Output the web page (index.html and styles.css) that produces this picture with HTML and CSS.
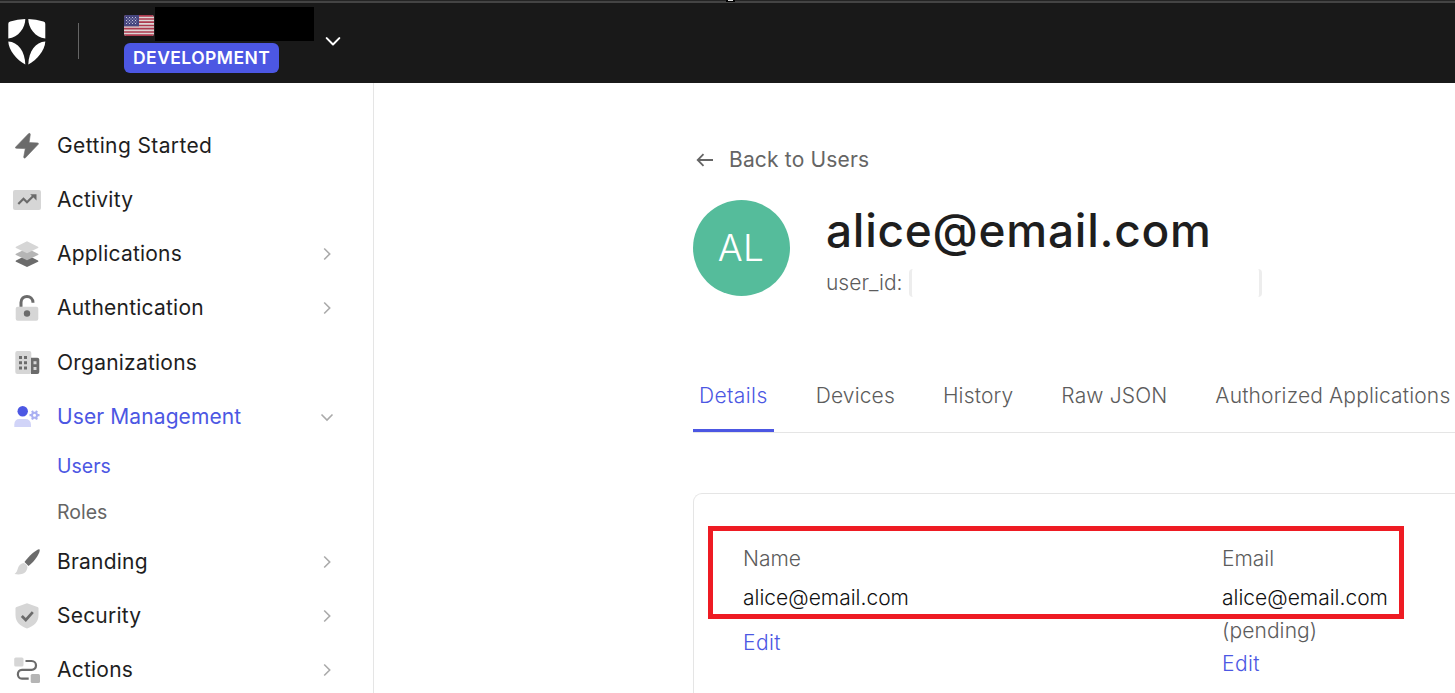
FILE: index.html
```html
<!DOCTYPE html>
<html lang="en">
<head>
<meta charset="utf-8">
<title>User Details</title>
<link rel="stylesheet" href="styles.css">
</head>
<body>
<header class="topbar">
  <span class="topbar-handle"></span>
  <svg class="logo" width="38" height="46" viewBox="0 0 38 46" fill="#fff">
    <path d="M17.3 0C17.4 8.5 10.500 18.600 0.300 19.500V4.700Q0.300 2.900 2.200 2.500Q9.500 0 17.300 0Z"/>
    <path d="M20.300 0C20.200 8.500 27.100 18.600 37.300 19.500V4.700Q37.300 2.900 35.400 2.500Q28.100 0 20.300 0Z"/>
    <path d="M0.300 22.400C10 23 17 32 17.300 45.600C8.500 40.500 0.800 31.500 0.300 22.400Z"/>
    <path d="M37.300 22.400C27.600 23 20.600 32 20.300 45.600C29.100 40.500 36.800 31.500 37.300 22.400Z"/>
  </svg>
  <span class="topbar-divider"></span>
  <div class="tenant">
    <div class="tenant-row">
      <svg class="flag" width="30" height="21" viewBox="0 0 30 21">
        <defs><clipPath id="flagClip"><rect width="30" height="21" rx="2.500"/></clipPath></defs>
        <g clip-path="url(#flagClip)">
          <rect width="30" height="21" fill="#dcd6d6"/>
          <path d="M0 .8H30M0 4H30M0 7.200H30M0 10.500H30M0 13.700H30M0 17H30M0 20.200H30" stroke="#ac3a4e" stroke-width="1.700"/>
          <rect width="15" height="11.300" fill="#46467f"/>
          <path d="M2 2.500H14M2 5.500H14M2 8.500H14" stroke="#c3c3da" stroke-width="1" stroke-dasharray="1 2"/>
          <path d="M3.500 4H13M3.500 7H13" stroke="#c3c3da" stroke-width="1" stroke-dasharray="1 2"/>
        </g>
      </svg>
      <span class="tenant-name"></span>
    </div>
    <span class="env-badge">DEVELOPMENT</span>
  </div>
  <svg class="tenant-caret" width="16" height="10" viewBox="0 0 16 10" fill="none" stroke="#fff" stroke-width="2" stroke-linecap="round" stroke-linejoin="round"><path d="M1.700 1.100L8 7.500L14.300 1.100"/></svg>
</header>

<div class="page">
  <nav class="sidebar">
    <a class="nav-item"><svg class="nav-icon" viewBox="0 0 28 28"><path d="M15.500 1.700L2.700 15Q1.800 16.200 3.300 16.300L12.300 16.600L10.700 25Q10.800 26.800 12.400 25.800L25.200 12.300Q26 11 24.500 10.900L16.100 10.600L17.300 2.500Q17.100 .6 15.500 1.700Z" fill="#6b6b6b" stroke="#6b6b6b" stroke-width=".6"/></svg><span class="nav-label wide">Getting Started</span></a>
    <a class="nav-item"><svg class="nav-icon" viewBox="0 0 28 28"><rect y="4" width="28" height="20" rx="2" fill="#d6d6d6"/><path d="M5.300 18L10.500 12.800L14 16.300L20.500 9.800" fill="none" stroke="#6b6b6b" stroke-width="2.200"/><path d="M17.200 8.300H23.500V14.600Z" fill="#6b6b6b"/></svg><span class="nav-label">Activity</span></a>
    <a class="nav-item"><svg class="nav-icon" viewBox="0 0 28 28"><path d="M3 20.500L14 15L25 20.500Q26 21.200 25 21.800L14 27L3 21.800Q2 21.200 3 20.500Z" fill="#6b6b6b"/><path d="M3 13.800L14 8.300L25 13.800Q26 14.500 25 15.100L14 20.300L3 15.100Q2 14.500 3 13.800Z" fill="#b5b5b5"/><path d="M3 6.800L14 1.300L25 6.800Q26 7.500 25 8.100L14 13.300L3 8.100Q2 7.500 3 6.800Z" fill="#d6d6d6"/></svg><span class="nav-label">Applications</span><svg class="chevron" viewBox="0 0 14 14"><path d="M4.200 1.500L9.700 7L4.200 12.500"/></svg></a>
    <a class="nav-item"><svg class="nav-icon" viewBox="0 0 28 28"><rect x="2.700" y="12.700" width="22.600" height="14" rx="2" fill="#d6d6d6"/><path d="M8 12.800V8.500C8 .3 20 .3 20 8.800" fill="none" stroke="#6b6b6b" stroke-width="3"/><circle cx="14" cy="19.500" r="3.200" fill="#6b6b6b"/></svg><span class="nav-label">Authentication</span><svg class="chevron" viewBox="0 0 14 14"><path d="M4.200 1.500L9.700 7L4.200 12.500"/></svg></a>
    <a class="nav-item"><svg class="nav-icon" viewBox="0 0 28 28"><rect x="2.300" y="2" width="16" height="23" rx="2" fill="#d6d6d6"/><path d="M18 8.700H24.300Q26.300 8.700 26.300 10.700V23Q26.300 25 24.300 25H18Z" fill="#6b6b6b"/><path d="M6 7h3v3h-3zM11 7h3v3h-3zM6 12.300h3v3h-3zM11 12.300h3v3h-3zM6 17.600h3v3h-3zM11 17.600h3v3h-3z" fill="#6b6b6b"/><path d="M20.500 12.300h3v3h-3zM20.500 18h3v3h-3z" fill="#d6d6d6"/></svg><span class="nav-label">Organizations</span></a>
    <a class="nav-item active"><svg class="nav-icon" viewBox="0 0 28 28"><circle cx="9.700" cy="8.300" r="5.200" fill="#4c57e3"/><path d="M1.300 24V21.500Q1.500 16 6.500 16H12.500Q17.500 16 18 21.500V24Z" fill="#d1d4f8"/><g fill="none" stroke="#aab0f2"><circle cx="21.500" cy="12.200" r="2.500" stroke-width="2"/><path stroke-width="2.200" d="M24 12.200H26.500M19 12.200H16.500M22.750 14.400L24 16.500M20.250 10L19 7.900M20.250 14.400L19 16.500M22.750 10L24 7.900"/></g></svg><span class="nav-label tight">User Management</span><svg class="chevron" viewBox="0 0 14 14"><path d="M1.500 4.500L7 10L12.500 4.500"/></svg></a>
    <div class="subnav">
      <a class="sub-item active">Users</a>
      <a class="sub-item">Roles</a>
    </div>
    <a class="nav-item"><svg class="nav-icon" viewBox="0 0 28 28"><path d="M26.500 1.300C28 3.500 22 13.500 15.500 18L11.500 14C16 7.500 24.500 .5 26.500 1.300Z" fill="#6b6b6b"/><path d="M10.300 15C12.500 15.500 14 17 14.500 19C14 25.500 8 27.500 1.500 26C3.700 24.500 4.200 22.500 5 20C5.800 17.500 7.700 15.500 10.300 15Z" fill="#d6d6d6"/></svg><span class="nav-label">Branding</span><svg class="chevron" viewBox="0 0 14 14"><path d="M4.200 1.500L9.700 7L4.200 12.500"/></svg></a>
    <a class="nav-item"><svg class="nav-icon" viewBox="0 0 28 28"><path d="M14 1.200L24.500 5Q25.500 5.400 25.500 6.500V13C25.500 20 21 24 14 26.500C7 24 2.500 20 2.500 13V6.500Q2.500 5.400 3.500 5Z" fill="#d6d6d6"/><path d="M8.800 14L12.800 18L19.800 10.200" fill="none" stroke="#6b6b6b" stroke-width="2.700"/></svg><span class="nav-label">Security</span><svg class="chevron" viewBox="0 0 14 14"><path d="M4.200 1.500L9.700 7L4.200 12.500"/></svg></a>
    <a class="nav-item"><svg class="nav-icon" viewBox="0 0 28 28"><rect x="1.200" y="1.500" width="9.300" height="9" rx="1.500" fill="#d6d6d6"/><rect x="17.700" y="18" width="9.300" height="9" rx="1.500" fill="#b5b5b5"/><path d="M12.500 5H18.500C24.500 5 24.500 13.800 18.500 13.800H9C3.500 13.800 3.500 22.700 9 22.700H15.700" fill="none" stroke="#6b6b6b" stroke-width="2.200"/></svg><span class="nav-label">Actions</span><svg class="chevron" viewBox="0 0 14 14"><path d="M4.200 1.500L9.700 7L4.200 12.500"/></svg></a>
  </nav>

  <main class="content">
    <a class="back"><svg width="18" height="14" viewBox="0 0 18 14" fill="none" stroke="#656565" stroke-width="1.800"><path d="M17 7H2M7.500 1.200L1.700 7L7.500 12.800"/></svg><span>Back to Users</span></a>
    <section class="profile">
      <div class="avatar">AL</div>
      <div class="identity">
        <h1 class="title">alice@email.com</h1>
        <div class="user-id"><span>user_id:</span><span class="id-value"></span></div>
      </div>
    </section>
    <div class="tabs">
      <a class="tab active">Details</a>
      <a class="tab">Devices</a>
      <a class="tab">History</a>
      <a class="tab">Raw JSON</a>
      <a class="tab">Authorized Applications</a>
    </div>
    <section class="card">
      <div class="highlight"></div>
      <div class="field">
        <div class="field-label">Name</div>
        <div class="field-value">alice@email.com</div>
        <a class="edit edit-name">Edit</a>
      </div>
      <div class="field">
        <div class="field-label">Email</div>
        <div class="field-value">alice@email.com</div>
        <div class="pending">(pending)</div>
        <a class="edit">Edit</a>
      </div>
    </section>
  </main>
</div>
</body>
</html>
```
FILE: styles.css
```css
* { box-sizing: border-box; }
body {
  margin: 0;
  width: 1455px;
  height: 693px;
  overflow: hidden;
  background: #fff;
  color: #1e1e1e;
  font-family: Inter, "Liberation Sans", sans-serif;
  font-size: 21px;
}
.topbar {
  position: relative;
  display: flex;
  align-items: flex-start;
  height: 83px;
  padding-left: 8px;
  background: linear-gradient(#242424 0 1px, #444 1px 3px, #191919 3px);
}
.topbar-handle {
  position: absolute;
  left: 726px;
  top: 0;
  width: 9px;
  height: 2px;
  background: #ddd;
  border: solid #000;
  border-width: 0 2px 1px;
}
.logo { margin-top: 19px; }
.topbar-divider { width: 1px; height: 36px; margin: 23px 0 0 32px; background: #656565; }
.tenant { width: 190px; margin: 7px 0 0 45px; }
.tenant-row { display: flex; gap: 1px; height: 34px; }
.flag { margin-top: 8px; }
.tenant-name { width: 159px; height: 34px; background: #000; }
.env-badge {
  display: block;
  width: 155px;
  height: 30px;
  margin-top: 2px;
  padding-left: 9px;
  border-radius: 6px;
  background: #4c57e3;
  color: #fff;
  font-size: 17.500px;
  font-weight: 600;
  line-height: 30px;
  letter-spacing: .45px;
  white-space: nowrap;
}
.tenant-caret { margin: 37px 0 0 11px; }
.page { display: flex; height: 610px; }
.sidebar {
  width: 374px;
  flex: none;
  padding: 36px 0 0 13px;
  border-right: 1px solid #e5e5e5;
}
.nav-item { display: flex; align-items: center; height: 54.150px; }
.nav-icon { width: 28px; height: 28px; flex: none; }
.nav-label {
  flex: 1;
  margin-left: 16px;
  padding-bottom: 1px;
  letter-spacing: .22px;
  white-space: nowrap;
}
.nav-label.wide { letter-spacing: .38px; }
.nav-label.tight { letter-spacing: .1px; }
.chevron {
  width: 14px;
  height: 14px;
  margin-right: 39px;
  fill: none;
  stroke: #aaa;
  stroke-width: 1.600;
}
.nav-item.active, .sub-item.active { color: #4c57e3; }
.subnav { height: 91px; padding-left: 44px; font-size: 19.500px; color: #656565; }
.sub-item { display: block; height: 46px; line-height: 44px; }
.content { flex: 1; min-width: 0; padding: 61px 0 0 319px; }
.back {
  display: flex;
  align-items: center;
  gap: 15px;
  height: 32px;
  padding-left: 3px;
  color: #656565;
  letter-spacing: .17px;
}
.back span { padding-bottom: 1px; }
.profile { display: flex; gap: 36px; height: 120px; padding-top: 24px; }
.avatar {
  width: 97px;
  height: 96px;
  padding-right: 1px;
  border-radius: 50%;
  background: #55bc9b;
  color: #fff;
  font-size: 37px;
  font-weight: 350;
  line-height: 95px;
  letter-spacing: .3px;
  text-align: center;
}
.title {
  margin: 0;
  font-size: 46px;
  font-weight: 500;
  line-height: 60px;
  letter-spacing: .75px;
  white-space: nowrap;
}
.user-id {
  display: flex;
  gap: 6px;
  height: 28px;
  margin-top: 9px;
  line-height: 28px;
  color: #5c5c5c;
  font-weight: 350;
}
.id-value { width: 353px; border: solid #ededed; border-width: 0 3px; border-radius: 4px; }
.tabs {
  display: flex;
  gap: 36px;
  height: 74px;
  margin-top: 63px;
  border-bottom: 1px solid #e5e5e5;
  color: #5c5c5c;
  line-height: 74px;
  font-weight: 350;
  letter-spacing: .15px;
}
.tab { height: 73px; padding: 0 6px; white-space: nowrap; }
.tab.active {
  width: 81px;
  letter-spacing: .4px;
  color: #4c57e3;
  border-bottom: 3px solid #4c57e3;
}
.card {
  position: relative;
  display: grid;
  grid-template-columns: 479px 1fr;
  height: 220px;
  margin-top: 60px;
  padding: 48px 0 0 49px;
  border: 1px solid #e5e5e5;
  border-right: 0;
  border-radius: 9px 0 0 9px;
  line-height: 33px;
  font-weight: 350;
}
.highlight {
  position: absolute;
  left: 14px;
  top: 32px;
  width: 696px;
  height: 93px;
  border: 5px solid #ee1b23;
}
.field-label { color: #5c5c5c; margin-bottom: 6px; }
.field-value { color: #111; }
.edit { display: block; color: #4c57e3; letter-spacing: .4px; }
.edit-name { margin-top: 12px; }
.pending { color: #5c5c5c; letter-spacing: .1px; }
```
